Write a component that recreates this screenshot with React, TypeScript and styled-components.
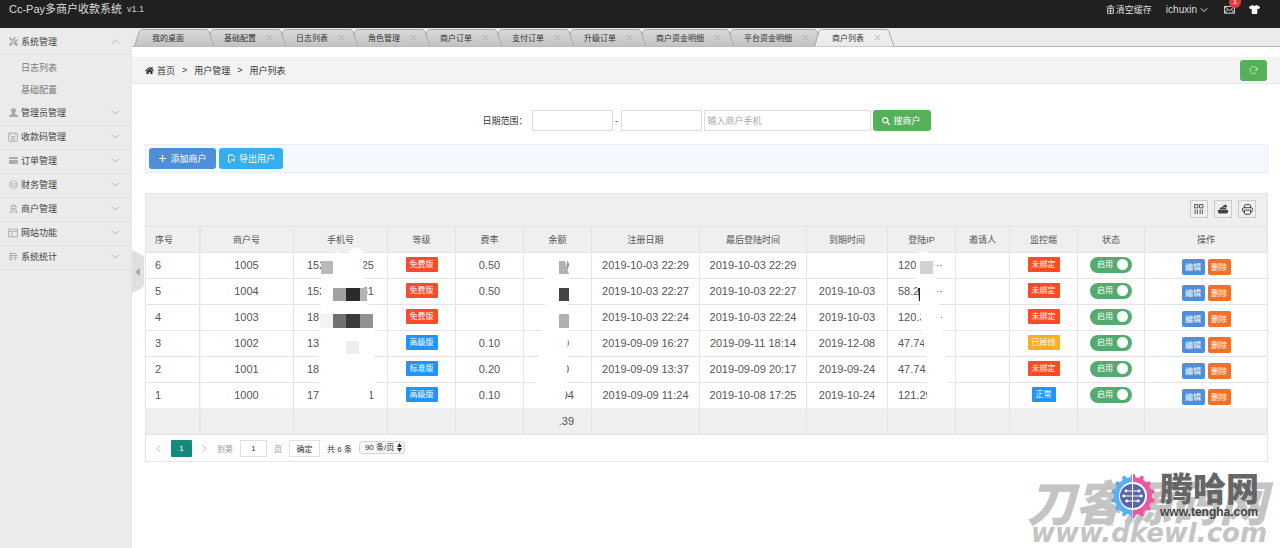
import React from 'react';
import styled, { createGlobalStyle } from 'styled-components';
import { ChevronDown, ChevronUp, ChevronLeft, ChevronRight, X } from 'lucide-react';
import { FaHome, FaSearch, FaTools, FaTshirt } from 'react-icons/fa';

const GlobalStyle = createGlobalStyle`
  * { box-sizing: border-box; }
  body { margin: 0; background: #fff; }
  body, button, input, select {
    font-family: "Liberation Sans", "Noto Sans CJK SC", sans-serif;
    font-size: 9px;
    color: #333;
  }
  button, input, select { margin: 0; padding: 0; }
  button { cursor: pointer; }
  a { color: inherit; text-decoration: none; }
  svg { display: block; flex: none; }
`;

const Page = styled.div`
  display: flex;
  flex-direction: column;
  min-height: 100vh;
  position: relative;
  overflow: hidden;
`;

/* ---------- header ---------- */

const Header = styled.header`
  display: flex;
  align-items: flex-start;
  height: 28px;
  padding: 0 20px 0 9px;
  background: #202020;
  color: #ddd;
`;

const Brand = styled.h1`
  margin: 0;
  font-size: 11px;
  font-weight: 400;
  line-height: 19px;
`;

const Version = styled.span`
  margin-left: 5px;
  font-size: 9px;
  line-height: 19px;
  color: #ccc;
`;

const HeaderTools = styled.nav`
  display: flex;
  align-items: center;
  margin-left: auto;
  height: 19px;
`;

const HeaderLink = styled.a<{ $size?: number }>`
  display: flex;
  align-items: center;
  position: relative;
  gap: 1px;
  margin-left: 14px;
  font-size: ${(p) => p.$size ?? 9}px;
`;

const Count = styled.span`
  position: absolute;
  left: 5px;
  top: -8px;
  width: 12px;
  height: 12px;
  border-radius: 6px;
  background: #dd403c;
  color: #fff;
  font-size: 8px;
  line-height: 12px;
  text-align: center;
`;

/* ---------- sidebar ---------- */

const Body = styled.div`
  display: flex;
  flex: 1;
`;

const Sidebar = styled.aside`
  position: relative;
  flex: 0 0 132px;
  padding-top: 3px;
  background: #ebebeb;
  border-right: 1px solid #e6e6e6;
`;

const MenuHead = styled.button`
  display: flex;
  align-items: center;
  width: 100%;
  height: 24px;
  padding: 0 9px 2px 8px;
  gap: 3px;
  border: 0;
  border-bottom: 1px solid #dfdfdf;
  background: none;
  color: #444;
  svg:last-child { margin-left: auto; color: #aaa; }
`;

const MenuIcon = styled.span`
  display: flex;
  justify-content: center;
  width: 10px;
  color: #98a1ad;
`;

const SubMenu = styled.div`
  display: flex;
  flex-direction: column;
  padding: 2px 0 1px 21px;
`;

const SubLink = styled.a`
  line-height: 22px;
  color: #777;
`;

const Handle = styled.button`
  position: absolute;
  left: 131px;
  top: 222px;
  z-index: 2;
  width: 13px;
  height: 44px;
  border: 0;
  background: none;
`;

/* ---------- tabs ---------- */

const Main = styled.main`
  flex: 1;
  min-width: 0;
`;

const TabBar = styled.div`
  display: flex;
  height: 19px;
  padding-left: 2px;
  background: #eceaed;
  border-bottom: 1px solid #b3b1b5;
`;

const Tab = styled.button<{ $w: number; $z: number }>`
  position: relative;
  z-index: ${(p) => p.$z};
  display: flex;
  align-items: center;
  justify-content: space-between;
  width: ${(p) => p.$w}px;
  height: 19px;
  padding: 0 4px 0 18px;
  border: 0;
  background: none;
  font-size: 8px;
  color: #333;
`;

const TabShape = styled.svg`
  position: absolute;
  left: 0;
  top: 0;
  z-index: -1;
`;

/* ---------- content ---------- */

const Crumbs = styled.div`
  display: flex;
  align-items: center;
  height: 27px;
  margin-top: 10px;
  padding: 0 13px;
  gap: 7px;
  background: #f3f3f3;
  border-bottom: 1px solid #eaeaea;
`;

const CrumbLink = styled.a`
  display: flex;
  align-items: center;
  gap: 3px;
`;

const Button = styled.button<{ $bg: string; $w: number }>`
  display: flex;
  align-items: center;
  justify-content: center;
  gap: 3px;
  width: ${(p) => p.$w}px;
  height: 21px;
  border: 0;
  border-radius: 3px;
  background: ${(p) => p.$bg};
  color: #fff;
`;

const RefreshButton = styled(Button)`
  margin-left: auto;
  color: #d5efd6;
`;

const Content = styled.div`
  padding: 26px 12px 0 13px;
`;

const SearchForm = styled.form`
  display: flex;
  align-items: center;
  justify-content: center;
  gap: 2px;
`;

const SearchLabel = styled.label`
  margin-right: 2px;
`;

const Dash = styled.span`
  width: 4px;
  text-align: center;
`;

const Field = styled.input<{ $w: number }>`
  width: ${(p) => p.$w}px;
  height: 21px;
  padding: 0 3px;
  border: 1px solid #ddd;
  background: #fff;
  &::placeholder { color: #aaa; opacity: 1; }
`;

const Actions = styled.div`
  display: flex;
  align-items: center;
  gap: 3px;
  height: 29px;
  margin-top: 13px;
  padding: 0 3px;
  border: 1px solid #e8eef3;
  background: #f4f9ff;
`;

const Panel = styled.section`
  margin-top: 20px;
  border: 1px solid #e4e4e4;
`;

const PanelTools = styled.div`
  display: flex;
  align-items: center;
  justify-content: flex-end;
  gap: 6px;
  height: 33px;
  padding: 0 11px 2px;
  background: #efefef;
  border-bottom: 1px solid #e2e2e2;
`;

const ToolButton = styled.button`
  display: flex;
  align-items: center;
  justify-content: center;
  width: 18px;
  height: 18px;
  border: 1px solid #ccc;
  background: none;
  color: #444;
`;

const TableWrap = styled.div`
  position: relative;
`;

const Table = styled.table`
  width: 100%;
  table-layout: fixed;
  border-collapse: separate;
  border-spacing: 0;
  color: #555;
  th, td {
    height: 26px;
    padding: 0;
    border-right: 1px solid #e4e4e4;
    border-bottom: 1px solid #e4e4e4;
    text-align: center;
    font-weight: 400;
    overflow: hidden;
    white-space: nowrap;
  }
  th:last-child, td:last-child { border-right: 0; }
  th { font-size: 9px; }
  td { font-size: 11px; line-height: 13px; }
  th:first-child, td:first-child {
    padding-left: 9px;
    text-align: left;
  }
  thead, tfoot { background: #efefef; }
  tbody tr:last-child td { border-bottom-color: #efefef; }
  td:nth-child(2), th:nth-child(2) {
    background-image: linear-gradient(to right, rgba(0, 0, 0, 0.04), transparent 3px);
  }
`;

const Split = styled.span<{ $w: number }>`
  display: flex;
  justify-content: space-between;
  width: ${(p) => p.$w}px;
  margin: 0 auto;
`;

const IpSplit = styled(Split)`
  margin: 0 0 0 10px;
`;

const Amount = styled.span<{ $short?: boolean }>`
  display: block;
  padding-right: ${(p) => (p.$short ? 22 : 17)}px;
  text-align: right;
`;

const Lift = styled.div<{ $up?: boolean }>`
  display: flex;
  justify-content: center;
  gap: 3px;
  ${(p) => (p.$up ? 'padding-bottom: 2px;' : 'padding-top: 2px;')}
`;

const Badge = styled.span<{ $bg: string }>`
  padding: 0 4px;
  border-radius: 1px;
  background: ${(p) => p.$bg};
  color: #fff;
  font-size: 8px;
  line-height: 15px;
`;

const RowButton = styled.button<{ $bg: string }>`
  width: 23px;
  height: 16px;
  border: 0;
  border-radius: 2px;
  background: ${(p) => p.$bg};
  color: #fff;
  font-size: 8px;
`;

const Toggle = styled.label`
  display: flex;
  align-items: center;
  justify-content: space-between;
  width: 42px;
  height: 16px;
  padding: 0 4px 0 7px;
  border-radius: 8px;
  background: #55aa70;
  color: #fff;
  font-size: 8px;
`;

const ToggleInput = styled.input`
  appearance: none;
  width: 11px;
  height: 11px;
  border-radius: 50%;
  background: #fff;
`;

const Redaction = styled.svg`
  position: absolute;
  left: 0;
  top: 0;
  overflow: visible;
  pointer-events: none;
`;

const Pager = styled.div`
  display: flex;
  align-items: center;
  height: 26px;
  padding-left: 7px;
  gap: 7px;
  font-size: 8px;
  color: #333;
`;

const PagerArrow = styled.button`
  display: flex;
  justify-content: center;
  width: 11px;
  border: 0;
  background: none;
  color: #bbb;
`;

const PageNumber = styled.button`
  width: 21px;
  height: 17px;
  border: 0;
  border-radius: 1px;
  background: #148a7c;
  color: #fff;
  font-size: 8px;
`;

const PagerLabel = styled.label`
  display: flex;
  align-items: center;
  gap: 7px;
  color: #999;
`;

const PagerInput = styled.input`
  width: 27px;
  height: 17px;
  border: 1px solid #e0e0e0;
  font-size: 8px;
  text-align: center;
`;

const PagerGo = styled.button`
  width: 31px;
  height: 17px;
  border: 1px solid #e0e0e0;
  background: #fff;
  font-size: 8px;
`;

const SelectBox = styled.span`
  position: relative;
  display: block;
  margin-bottom: 2px;
`;

const PageSize = styled.select`
  display: block;
  appearance: none;
  width: 46px;
  height: 13px;
  padding: 0 0 0 5px;
  border: 1px solid #d6d6d6;
  border-radius: 3px;
  background: #f6f6f6;
  font-size: 8px;
  line-height: 11px;
`;

const SelectArrows = styled.svg`
  position: absolute;
  right: 3px;
  top: 2px;
  pointer-events: none;
`;

/* ---------- watermark ---------- */

const Watermark = styled.div`
  position: absolute;
  right: 13px;
  bottom: 0;
  z-index: 3;
  color: #c4c4c4;
  font-family: "DejaVu Sans", "Noto Sans CJK SC", sans-serif;
  font-weight: 700;
  font-style: italic;
  text-align: right;
  pointer-events: none;
`;

const MarkTitle = styled.div`
  font-family: "Noto Sans CJK SC", sans-serif;
  font-size: 48px;
  font-weight: 900;
  line-height: 36px;
`;

const MarkUrl = styled.div`
  font-size: 26px;
  line-height: 30px;
`;

const Sponsor = styled.div`
  position: absolute;
  right: 21px;
  bottom: 30px;
  z-index: 4;
  display: flex;
  align-items: center;
  gap: 5px;
  pointer-events: none;
`;

const SponsorName = styled.div`
  color: #666;
  font-size: 33px;
  font-weight: 900;
  line-height: 32px;
`;

const SponsorUrl = styled.div`
  color: #444;
  font-size: 12px;
  font-weight: 700;
  line-height: 12px;
`;

/* ---------- icons ---------- */

const Glyph = ({ size = 9, children }: { size?: number; children: React.ReactNode }) => (
  <svg width={size} height={size} viewBox="0 0 18 18" fill="none" stroke="currentColor" strokeWidth="1.6">
    {children}
  </svg>
);

const UserIcon = () => (
  <Glyph>
    <path d="M9 0c3 0 5 2 5 5 0 2-1 4-2 5v2l5 2q1 1 1 4H0q0-3 1-4l5-2v-2C5 9 4 7 4 5c0-3 2-5 5-5z" fill="currentColor" stroke="none" />
  </Glyph>
);
const ClipIcon = () => (
  <Glyph size={10}>
    <rect x="1" y="2" width="16" height="15" rx="2" />
    <path d="M4 1v5M14 1v5M5 8h8M5 11h8M5 14h8" />
  </Glyph>
);
const CardIcon = () => (
  <Glyph>
    <path fill="currentColor" stroke="none" d="M2 2h14q2 0 2 2v2H0V4q0-2 2-2zM0 8h18v6q0 2-2 2H2q-2 0-2-2zm11 4v1h5v-1z" fillRule="evenodd" />
  </Glyph>
);
const CoinsIcon = () => (
  <Glyph>
    <ellipse cx="9" cy="5" rx="7" ry="3" />
    <path d="M2 5v8c0 4 14 4 14 0V5M2 9c0 4 14 4 14 0" />
  </Glyph>
);
const ShopIcon = () => (
  <Glyph>
    <path d="M4 9V6q0-5 5-5t5 5v3M4 5h10M5 9l-3 8h4l1-3h4l1 3h4l-3-8zM7 11h4" />
  </Glyph>
);
const SiteIcon = () => (
  <Glyph size={10}>
    <path d="M1 2h16v14H1zM1 6h16M7 6v10" />
  </Glyph>
);
const StatsIcon = () => (
  <Glyph>
    <path d="M2 1v16M2 3h13M2 7h15M2 11h7M2 15h5" strokeWidth="2" />
    <path d="M9 13l4-3 4 2M13 10v7" />
  </Glyph>
);
const BinIcon = () => (
  <Glyph>
    <path d="M1 4h16M6 4l1-3h4l1 3M3 7h12v10H3zM3 12h12M9 7v10" />
  </Glyph>
);
const MailIcon = () => (
  <Glyph size={11}>
    <path d="M1 4h16v11H1zM1 4l8 7 8-7M1 15l5-6M17 15l-5-6" />
  </Glyph>
);
const PlusIcon = () => (
  <Glyph>
    <path d="M9 2v14M2 9h14" strokeWidth="2.4" />
  </Glyph>
);
const ExportIcon = () => (
  <Glyph>
    <path d="M8 16H3V2h9l3 3v3M8 12h8M13 9l3 3-3 3" strokeWidth="2" />
  </Glyph>
);
const RefreshIcon = () => (
  <Glyph>
    <path d="M15 12a7 7 0 1 1 1-5M16 3v5h-5" strokeWidth="1.5" />
  </Glyph>
);
const ColumnsIcon = () => (
  <Glyph size={10}>
    <path d="M1 1h6v6H1zM10 1h6v6h-6zM2 10v8M6 10v8M11 10v8M15 10v8" />
  </Glyph>
);
const OutIcon = () => (
  <Glyph size={10}>
    <path d="M0 11h18v4q0 2-2 2H2q-2 0-2-2zM2 10l3-4h3q1-4 4-4V0l5 4-5 4V5q-2 0-2 2h4l2 3z" fill="currentColor" stroke="none" />
  </Glyph>
);
const PrintIcon = () => (
  <Glyph size={11}>
    <path d="M4 6V3q0-2 2-2h6q2 0 2 2v3M4 13H3q-2 0-2-2V8q0-2 2-2h12q2 0 2 2v3q0 2-2 2h-1M4 10h10v5q0 2-2 2H6q-2 0-2-2z" />
  </Glyph>
);

const gearPath = (() => {
  const teeth = 14;
  const pts: string[] = [];
  for (let i = 0; i < teeth; i++) {
    [[-0.3, 19], [-0.14, 22], [0.14, 22], [0.3, 19]].forEach(([o, r]) => {
      const a = ((i + o) / teeth) * Math.PI * 2 - Math.PI / 2;
      pts.push(`${(22 + r * Math.cos(a)).toFixed(1)},${(22 + r * Math.sin(a)).toFixed(1)}`);
    });
  }
  return `M${pts.join('L')}Z`;
})();

const Gear = () => (
  <svg width="44" height="44" viewBox="0 0 44 44">
    <clipPath id="gear-left"><rect width="21" height="44" /></clipPath>
    <clipPath id="gear-right"><rect x="22" width="22" height="44" /></clipPath>
    <path d={gearPath} fill="#5aaef5" clipPath="url(#gear-left)" />
    <path d={gearPath} fill="#f0559f" clipPath="url(#gear-right)" />
    <circle cx="22" cy="22" r="14" fill="#fff" />
    <path d="M21 10a12 12 0 0 0 0 24zM22 10a12 12 0 0 1 0 24z" fill="#5a65ac" />
    <path d="M14 17h7M11 22h10M14 27h7M22 17h7M22 22h10M22 27h7" stroke="#fff" strokeWidth="1" />
    <g fill="#fff">
      <circle cx="15" cy="17" r="1.4" /><circle cx="13" cy="22" r="1.4" /><circle cx="16" cy="27" r="1.4" />
      <circle cx="28" cy="17" r="1.4" /><circle cx="30" cy="22" r="1.4" /><circle cx="27" cy="27" r="1.4" />
    </g>
  </svg>
);

/* ---------- data ---------- */

const menu = [
  { name: '系统管理', icon: <FaTools size={9} />, children: ['日志列表', '基础配置'] },
  { name: '管理员管理', icon: <UserIcon /> },
  { name: '收款码管理', icon: <ClipIcon /> },
  { name: '订单管理', icon: <CardIcon /> },
  { name: '财务管理', icon: <CoinsIcon /> },
  { name: '商户管理', icon: <ShopIcon /> },
  { name: '网站功能', icon: <SiteIcon /> },
  { name: '系统统计', icon: <StatsIcon /> },
];

const tabs = ['我的桌面', '基础配置', '日志列表', '角色管理', '商户订单', '支付订单', '升级订单', '商户资金明细', '平台资金明细', '商户列表'];

const columns: [string, number?][] = [
  ['序号', 54], ['商户号', 94], ['手机号', 94], ['等级', 68], ['费率', 68], ['余额', 68], ['注册日期', 108],
  ['最后登陆时间', 107], ['到期时间', 81], ['登陆IP', 68], ['邀请人', 54], ['监控端', 68], ['状态', 67], ['操作'],
];

const RED = '#ff4a26';
const BLUE = '#1e96ff';
const AMBER = '#ffac28';

const rows = [
  { no: 6, id: 1005, tel: ['152', '25'], level: '免费版', rate: '0.50', sum: '9', reg: '2019-10-03 22:29', last: '2019-10-03 22:29', end: '', ip: ['120', '···'], mon: '未绑定' },
  { no: 5, id: 1004, tel: ['152', '61'], level: '免费版', rate: '0.50', sum: '', reg: '2019-10-03 22:27', last: '2019-10-03 22:27', end: '2019-10-03', ip: ['58.2', '··'], mon: '未绑定' },
  { no: 4, id: 1003, tel: ['180', ''], level: '免费版', rate: '', sum: '', reg: '2019-10-03 22:24', last: '2019-10-03 22:24', end: '2019-10-03', ip: ['120.3', '·'], mon: '未绑定' },
  { no: 3, id: 1002, tel: ['133', ''], level: '高级版', rate: '0.10', sum: '0', reg: '2019-09-09 16:27', last: '2019-09-11 18:14', end: '2019-12-08', ip: ['47.74', ''], mon: '已掉线' },
  { no: 2, id: 1001, tel: ['18', ''], level: '标准版', rate: '0.20', sum: '0', reg: '2019-09-09 13:37', last: '2019-09-09 20:17', end: '2019-09-24', ip: ['47.74.', ''], mon: '未绑定' },
  { no: 1, id: 1000, tel: ['17', '1'], level: '高级版', rate: '0.10', sum: '94', reg: '2019-09-09 11:24', last: '2019-10-08 17:25', end: '2019-10-24', ip: ['121.29', ''], mon: '正常' },
];

const monitorColor: Record<string, string> = { 未绑定: RED, 已掉线: AMBER, 正常: BLUE };

const TabItem = ({ label, index }: { label: string; index: number }) => {
  const w = label.length * 8 + 40;
  const active = index === tabs.length - 1;
  return (
    <Tab type="button" $w={w} $z={active ? 20 : 15 - index}>
      <TabShape width={w + 9} height="19">
        <defs>
          <linearGradient id={`tab-${index}`} x1="0" y1="0" x2="0" y2="1">
            <stop offset="0" stopColor={active ? '#f1f1f1' : '#d9dad9'} />
            <stop offset="1" stopColor={active ? '#e9e9ea' : '#c2c2c3'} />
          </linearGradient>
        </defs>
        <path
          d={`M0.5 18.5L5 4Q6 1.5 8 1.5H${w}Q${w + 2} 1.5 ${w + 3} 4L${w + 8} 18.5`}
          fill={`url(#tab-${index})`}
          stroke="#a9a9a9"
        />
      </TabShape>
      {label}
      {index > 0 && <X size={9} color="#98a4b0" strokeWidth={2} />}
    </Tab>
  );
};

/* Smudges over private digits; drawn in table coordinates. */
const Smudges = () => (
  <Redaction width="1" height="1">
    <g fill="#fff">
      <circle cx="210" cy="30" r="9" />
      <ellipse cx="191" cy="32" rx="9" ry="7" />
      <path d="M175 30h41q2 9 2 22l2 24 7 6v18l3 6v20l-3 6v20l3 4v3h-6v22H173V84l2-8z" />
      <path d="M413 34h8v43h1v30l-1 24v22l-3 28h-29v-27l3-18 4-30 3-30V51h14z" />
      <circle cx="777" cy="31" r="7" />
      <path d="M770 30h17l3 22 3 26 4 26 3 26 3 26v25h-22v-25l-1-26-4-26-2-26-4-26z" />
    </g>
    <g>
      <path d="M175 34h12v13h-12z" fill="#b9b9b9" />
      <path d="M187 61h13v13h-13z" fill="#a2a2a2" />
      <path d="M200 61h14v13h-14z" fill="#2b2b2b" />
      <path d="M214 61h7v13h-7z" fill="#b4b4b4" />
      <path d="M174 87h13v14h-13z" fill="#f3f3f3" />
      <path d="M187 87h13v14h-13z" fill="#717171" />
      <path d="M200 87h14v14h-14z" fill="#3b3b3b" />
      <path d="M214 87h13v14h-13z" fill="#929292" />
      <path d="M200 114h13v13h-13z" fill="#eee" />
      <path d="M413 34h6l4 13h-10z" fill="#b2b2b2" />
      <path d="M413 61h10v13h-10z" fill="#444" />
      <path d="M413 87h10v14h-10z" fill="#b0b0b0" />
      <path d="M774 34h13v13h-13z" fill="#d2d2d2" />
      <path d="M772 61h2v13h-1z" fill="#222" />
    </g>
  </Redaction>
);

export default function App() {
  return (
    <Page>
      <GlobalStyle />
      <Header>
        <Brand>Cc-Pay多商户收款系统</Brand>
        <Version>v1.1</Version>
        <HeaderTools>
          <HeaderLink href="#cache"><BinIcon />清空缓存</HeaderLink>
          <HeaderLink href="#user" $size={10}>ichuxin<ChevronDown size={12} /></HeaderLink>
          <HeaderLink href="#mail" aria-label="消息"><MailIcon /><Count>1</Count></HeaderLink>
          <HeaderLink href="#theme" aria-label="皮肤"><FaTshirt size={11} color="#fff" /></HeaderLink>
        </HeaderTools>
      </Header>
      <Body>
        <Sidebar>
          {menu.map((m) => (
            <React.Fragment key={m.name}>
              <MenuHead type="button">
                <MenuIcon>{m.icon}</MenuIcon>
                {m.name}
                {m.children ? <ChevronUp size={13} strokeWidth={1.6} /> : <ChevronDown size={13} strokeWidth={1.6} />}
              </MenuHead>
              {m.children && (
                <SubMenu>
                  {m.children.map((c) => <SubLink key={c} href="#menu">{c}</SubLink>)}
                </SubMenu>
              )}
            </React.Fragment>
          ))}
          <Handle type="button" aria-label="收起菜单">
            <svg width="13" height="44" viewBox="0 0 13 44">
              <path d="M1 0L11 5Q13 6 13 8V34Q13 36 11 38L1 43Z" fill="#e0e0e0" />
              <path d="M9 18v8l-5-4z" fill="#aaa" />
            </svg>
          </Handle>
        </Sidebar>
        <Main>
          <TabBar>
            {tabs.map((t, i) => <TabItem key={t} label={t} index={i} />)}
          </TabBar>
          <Crumbs>
            <CrumbLink href="#home"><FaHome size={9} />首页</CrumbLink>
            <span>&gt;</span>
            <CrumbLink href="#users">用户管理</CrumbLink>
            <span>&gt;</span>
            <CrumbLink href="#list">用户列表</CrumbLink>
            <RefreshButton type="button" aria-label="刷新" $bg="#55b059" $w={27}><RefreshIcon /></RefreshButton>
          </Crumbs>
          <Content>
            <SearchForm onSubmit={(e) => e.preventDefault()}>
              <SearchLabel htmlFor="from">日期范围：</SearchLabel>
              <Field id="from" $w={81} />
              <Dash>-</Dash>
              <Field id="to" aria-label="结束日期" $w={81} />
              <Field id="phone" aria-label="商户手机" placeholder="输入商户手机" $w={167} />
              <Button type="submit" $bg="#55b059" $w={58}><FaSearch size={8} />搜商户</Button>
            </SearchForm>
            <Actions>
              <Button type="button" $bg="#4f8fd8" $w={67}><PlusIcon />添加商户</Button>
              <Button type="button" $bg="#36aeee" $w={64}><ExportIcon />导出用户</Button>
            </Actions>
            <Panel>
              <PanelTools>
                <ToolButton type="button" aria-label="筛选列"><ColumnsIcon /></ToolButton>
                <ToolButton type="button" aria-label="导出"><OutIcon /></ToolButton>
                <ToolButton type="button" aria-label="打印"><PrintIcon /></ToolButton>
              </PanelTools>
              <TableWrap>
                <Table>
                  <colgroup>
                    {columns.map(([n, w]) => <col key={n} width={w} />)}
                  </colgroup>
                  <thead>
                    <tr>{columns.map(([n]) => <th key={n} scope="col">{n}</th>)}</tr>
                  </thead>
                  <tbody>
                    {rows.map((r) => (
                      <tr key={r.no}>
                        <td>{r.no}</td>
                        <td>{r.id}</td>
                        <td><Split $w={67}><span>{r.tel[0]}</span><span>{r.tel[1]}</span></Split></td>
                        <td><Lift $up><Badge $bg={r.level === '免费版' ? RED : BLUE}>{r.level}</Badge></Lift></td>
                        <td>{r.rate}</td>
                        <td><Amount $short={r.sum.length < 2}>{r.sum}</Amount></td>
                        <td>{r.reg}</td>
                        <td>{r.last}</td>
                        <td>{r.end}</td>
                        <td><IpSplit $w={45}><span>{r.ip[0]}</span><span>{r.ip[1]}</span></IpSplit></td>
                        <td />
                        <td><Lift $up><Badge $bg={monitorColor[r.mon]}>{r.mon}</Badge></Lift></td>
                        <td>
                          <Lift $up>
                            <Toggle>启用<ToggleInput type="checkbox" defaultChecked /></Toggle>
                          </Lift>
                        </td>
                        <td>
                          <Lift>
                            <RowButton type="button" $bg="#4f8fd8">编辑</RowButton>
                            <RowButton type="button" $bg="#f37028">删除</RowButton>
                          </Lift>
                        </td>
                      </tr>
                    ))}
                  </tbody>
                  <tfoot>
                    <tr>
                      {columns.map(([n]) => <td key={n}>{n === '余额' && <Amount>.39</Amount>}</td>)}
                    </tr>
                  </tfoot>
                </Table>
                <Smudges />
              </TableWrap>
              <Pager>
                <PagerArrow type="button" aria-label="上一页"><ChevronLeft size={13} strokeWidth={1.8} /></PagerArrow>
                <PageNumber type="button">1</PageNumber>
                <PagerArrow type="button" aria-label="下一页"><ChevronRight size={13} strokeWidth={1.8} /></PagerArrow>
                <PagerLabel>到第<PagerInput defaultValue="1" />页</PagerLabel>
                <PagerGo type="button">确定</PagerGo>
                <span>共 6 条</span>
                <SelectBox>
                  <PageSize aria-label="每页条数"><option>90 条/页</option></PageSize>
                  <SelectArrows width="5" height="9" viewBox="0 0 10 18">
                    <path d="M0 8l5-8 5 8zM0 10h10l-5 8z" fill="#333" />
                  </SelectArrows>
                </SelectBox>
              </Pager>
            </Panel>
          </Content>
        </Main>
      </Body>
      <Watermark>
        <MarkTitle>刀客源码网</MarkTitle>
        <MarkUrl>www.dkewl.com</MarkUrl>
      </Watermark>
      <Sponsor>
        <Gear />
        <div>
          <SponsorName>腾哈网</SponsorName>
          <SponsorUrl>www.tengha.com</SponsorUrl>
        </div>
      </Sponsor>
    </Page>
  );
}
